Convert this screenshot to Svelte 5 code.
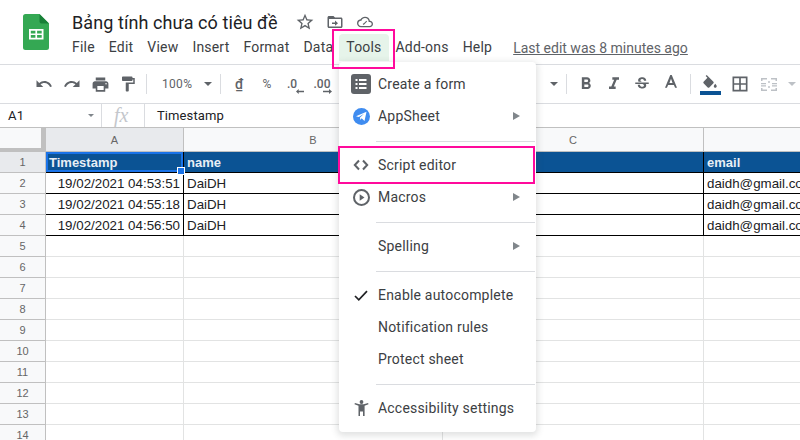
<script lang="ts">
  const menus = ['File', 'Edit', 'View', 'Insert', 'Format', 'Data', 'Tools', 'Add-ons', 'Help'];
  const times = ['19/02/2021 04:53:51', '19/02/2021 04:55:18', '19/02/2021 04:56:50'];
  const blankRows = [5, 6, 7, 8, 9, 10, 11, 12, 13, 14];
</script>

<div class="page">
  <header class="top">
    <svg class="logo" width="26" height="36" viewBox="0 0 26 36">
      <path d="M2.500 0H16.500L26 9.500V33.500a2.500 2.500 0 0 1-2.500 2.500H2.500A2.500 2.500 0 0 1 0 33.500V2.500A2.500 2.500 0 0 1 2.500 0z" fill="#34a853" />
      <path d="M16.500 0L26 9.500H18.500a2 2 0 0 1-2-2z" fill="#188038" />
      <path d="M6 15h14.500v10.500H6zM7.800 16.700v2.700h4.600v-2.700zm6.300 0v2.700h4.600v-2.700zM7.800 21v2.800h4.600V21zm6.300 0v2.800h4.600V21z" fill="#fff" fill-rule="evenodd" />
    </svg>
    <div class="titles">
      <div class="title-row">
        <span class="doc-title">Bảng tính chưa có tiêu đề</span>
        <svg class="ticon star" width="20" height="20" viewBox="0 0 24 24"><path fill="#5f6368" d="M22 9.240l-7.190-.620L12 2 9.190 8.630 2 9.240l5.460 4.730L5.820 21 12 17.270 18.180 21l-1.630-7.030L22 9.240zM12 15.400l-3.760 2.270 1-4.280-3.320-2.880 4.380-.380L12 6.100l1.710 4.040 4.380.380-3.320 2.880 1 4.280L12 15.400z" /></svg>
        <svg class="ticon folder" width="18" height="18" viewBox="0 0 24 24"><path fill="#5f6368" d="M20 6h-8l-2-2H4c-1.100 0-2 .9-2 2v12c0 1.100.9 2 2 2h16c1.100 0 2-.9 2-2V8c0-1.100-.9-2-2-2zm0 12H4V8h16v10zm-8-1l4-3.500-4-3.500v2.500H8v2h4V17z" /></svg>
        <svg class="ticon" width="16" height="16" viewBox="0 0 24 24"><path fill="#5f6368" d="M19.350 10.040A7.490 7.490 0 0 0 12 4C9.110 4 6.600 5.640 5.350 8.040A5.994 5.994 0 0 0 0 14c0 3.310 2.690 6 6 6h13c2.760 0 5-2.240 5-5 0-2.640-2.050-4.780-4.650-4.960zM19 18H6c-2.210 0-4-1.790-4-4s1.790-4 4-4h.71C7.370 7.690 9.480 6 12 6c3.040 0 5.500 2.460 5.500 5.500v.5H19c1.660 0 3 1.340 3 3s-1.340 3-3 3zm-9-1.500l-1.500-1.500 1.100-1.100.4.400 4-4 1.100 1.100-5.100 5.100z" /></svg>
      </div>
      <nav class="menubar">
        {#each menus as m}
          <span class="menu-item" class:open={m === 'Tools'}>{m}</span>
        {/each}
        <span class="last-edit">Last edit was 8 minutes ago</span>
      </nav>
    </div>
  </header>

  <div class="toolbar">
    <button class="tb"><svg width="18" height="18" viewBox="0 0 24 24"><path d="M12.500 8c-2.650 0-5.050.99-6.900 2.600L2 7v9h9l-3.620-3.620c1.390-1.160 3.160-1.880 5.120-1.880 3.540 0 6.550 2.310 7.600 5.500l2.370-.78C21.080 11.030 17.150 8 12.500 8z" /></svg></button>
    <button class="tb"><svg width="18" height="18" viewBox="0 0 24 24"><path d="M18.400 10.600C16.550 8.990 14.150 8 11.500 8c-4.650 0-8.580 3.030-9.960 7.220L3.900 16c1.050-3.190 4.050-5.500 7.600-5.500 1.950 0 3.730.72 5.120 1.880L13 16h9V7l-3.600 3.600z" /></svg></button>
    <button class="tb"><svg width="19" height="19" viewBox="0 0 24 24"><path d="M19 8H5c-1.660 0-3 1.340-3 3v6h4v4h12v-4h4v-6c0-1.660-1.340-3-3-3zm-3 11H8v-5h8v5zm3-7c-.55 0-1-.45-1-1s.45-1 1-1 1 .45 1 1-.45 1-1 1zm-1-9H6v4h12V3z" /></svg></button>
    <button class="tb"><svg width="18" height="18" viewBox="0 0 24 24"><path d="M18 4V3c0-.55-.45-1-1-1H5c-.55 0-1 .45-1 1v4c0 .55.45 1 1 1h12c.55 0 1-.45 1-1V6h1v4H9v11c0 .55.45 1 1 1h2c.55 0 1-.45 1-1v-9h8V4h-3z" /></svg></button>
    <span class="sep first"></span>
    <span class="zoom-val">100%</span>
    <span class="caret"></span>
    <span class="sep"></span>
    <span class="fmt dong">₫</span>
    <span class="fmt pct">%</span>
    <span class="fmt dec1">.0<svg width="8" height="5" viewBox="0 0 9 6" preserveAspectRatio="none"><path d="M0 3l3-3v2h6v2H3v2z" fill="#5f6368" /></svg></span>
    <span class="fmt dec2">.00<svg width="9" height="5" viewBox="0 0 9 6" preserveAspectRatio="none"><path d="M9 3L6 0v2H0v2h6v2z" fill="#5f6368" /></svg></span>
    <span class="grow"></span>
    <span class="caret"></span>
    <span class="sep after-caret"></span>
    <button class="tb"><svg width="20" height="20" viewBox="0 0 24 24"><path d="M15.600 10.790c.97-.67 1.650-1.770 1.650-2.790 0-2.260-1.750-4-4-4H7v14h7.040c2.090 0 3.710-1.700 3.710-3.790 0-1.520-.86-2.820-2.150-3.420zM10 6.500h3c.83 0 1.500.67 1.500 1.500s-.67 1.500-1.500 1.500h-3v-3zm3.500 9H10v-3h3.500c.83 0 1.500.67 1.500 1.500s-.67 1.500-1.500 1.500z" /></svg></button>
    <button class="tb"><svg width="20" height="20" viewBox="0 0 24 24"><path d="M10 4v3h2.210l-3.420 8H6v3h8v-3h-2.210l3.420-8H18V4z" /></svg></button>
    <button class="tb"><svg width="18" height="18" viewBox="0 0 24 24"><path d="M7.240 8.750c-.26-.48-.39-1.030-.39-1.670 0-.61.13-1.160.4-1.670.26-.5.63-.93 1.110-1.290.48-.35 1.050-.63 1.700-.83.66-.19 1.390-.29 2.180-.29.81 0 1.540.11 2.210.34.66.22 1.230.54 1.690.94.47.4.83.88 1.080 1.430.25.55.38 1.150.38 1.810h-3.010c0-.31-.05-.59-.15-.85-.09-.27-.24-.49-.44-.68-.2-.19-.45-.33-.75-.44-.3-.1-.66-.16-1.060-.16-.39 0-.74.04-1.030.13-.29.09-.53.21-.72.36-.19.16-.34.34-.44.55-.1.21-.15.43-.15.66 0 .48.25.88.74 1.210.38.25.77.48 1.410.7H7.390c-.05-.08-.11-.17-.15-.25zM21 12v-2H3v2h9.620c.18.07.4.14.55.2.37.17.66.34.87.51.21.17.35.36.43.57.07.2.11.43.11.69 0 .23-.05.45-.14.66-.09.2-.23.38-.42.53-.19.15-.42.26-.71.35-.29.08-.63.13-1.010.13-.43 0-.83-.04-1.180-.13s-.66-.23-.91-.42c-.25-.19-.45-.44-.59-.75-.14-.31-.25-.76-.25-1.210H6.400c0 .55.08 1.130.24 1.580.16.45.37.85.65 1.210.28.35.6.66.98.92.37.26.78.48 1.220.65.44.17.9.3 1.380.39.48.08.96.13 1.440.13.8 0 1.530-.09 2.180-.28s1.210-.45 1.670-.79c.46-.34.82-.77 1.070-1.270s.38-1.070.38-1.710c0-.6-.1-1.140-.31-1.610-.05-.11-.11-.23-.17-.33H21z" /></svg></button>
    <button class="tb letter-a"><svg width="18" height="18" viewBox="0 0 24 24"><path d="M9.930 13.500h4.140L12 7.980zM11 3h2l7 17h-2.600l-1.500-3.800H8.100L6.600 20H4z" transform="translate(0 -3)" /></svg></button>
    <span class="sep fill-sep"></span>
    <button class="tb fill">
      <svg width="18" height="18" viewBox="0 0 24 24"><path d="M16.560 8.940L7.620 0 6.210 1.410l2.380 2.380-5.150 5.150c-.59.59-.59 1.540 0 2.120l5.500 5.500c.29.29.68.44 1.060.44s.77-.15 1.060-.44l5.500-5.500c.59-.58.59-1.530 0-2.120zM19 11.500s-2 2.170-2 3.500c0 1.100.9 2 2 2s2-.9 2-2c0-1.330-2-3.500-2-3.500z" /></svg>
      <span class="swatch"></span>
    </button>
    <button class="tb borders"><svg width="20" height="20" viewBox="0 0 24 24"><path d="M3 3v18h18V3H3zm8 16H5v-6h6v6zm0-8H5V5h6v6zm8 8h-6v-6h6v6zm0-8h-6V5h6v6z" /></svg></button>
    <button class="tb off"><svg width="16" height="13" viewBox="0 0 16 13"><path d="M0 0h6v1.500H1.500V3H0zM10 0h6v3h-1.500V1.500H10zM0 10h1.500v1.500H6V13H0zM14.500 10H16v3h-6v-1.500h4.500zM0 5h5v1.300H0zM0 7.300h5v1.300H0zM11 5h5v1.300h-5zM11 7.300h5v1.300h-5zM7.300 3h1.400v2H7.300zM7.300 8h1.400v2H7.300z" /></svg></button>
    <span class="caret off-caret"></span>
  </div>

  <div class="formula">
    <span class="name-box">A1<span class="small-caret"></span></span>
    <span class="fx">fx</span>
    <span class="f-value">Timestamp</span>
  </div>

  <div class="grid">
    <div class="corner"></div>
    <div class="col sel">A</div>
    <div class="col">B</div>
    <div class="col">C</div>
    <div class="col last"></div>

    <div class="row-h sel">1</div>
    <div class="cell hd">Timestamp<span class="handle"></span></div>
    <div class="cell hd">name</div>
    <div class="cell hd"></div>
    <div class="cell hd nr">email</div>

    {#each times as t, i}
      <div class="row-h">{i + 2}</div>
      <div class="cell data num">{t}</div>
      <div class="cell data">DaiDH</div>
      <div class="cell data"></div>
      <div class="cell data nr">daidh@gmail.com</div>
    {/each}

    {#each blankRows as r}
      <div class="row-h">{r}</div>
      <div class="cell"></div>
      <div class="cell"></div>
      <div class="cell"></div>
      <div class="cell nr"></div>
    {/each}
  </div>

  <div class="dropdown">
    <div class="m-item">
      <span class="m-icon"><svg width="20" height="20" viewBox="0 0 20 20"><rect width="20" height="20" rx="3" fill="#5f6368" /><path d="M4.500 5h2v2h-2zM8 5h7.500v2H8zM4.500 9h2v2h-2zM8 9h7.500v2H8zM4.500 13h2v2h-2zM8 13h7.500v2H8z" fill="#fff" /></svg></span>
      Create a form
    </div>
    <div class="m-item">
      <span class="m-icon"><svg width="17" height="17" viewBox="0 0 17 17"><circle cx="8.500" cy="8.500" r="8.500" fill="#3f8cf0" /><path d="M3 8.200L13.500 3.800 11.500 13 8.600 10.300 7.300 12 7 9.500 11 5.800 5.800 9z" fill="#fff" /></svg></span>
      AppSheet
      <span class="arrow"></span>
    </div>
    <div class="m-sep"></div>
    <div class="m-item">
      <span class="m-icon"><svg width="16" height="12" viewBox="0 0 16 12"><path d="M6 1.500L1.800 6 6 10.500M10 1.500L14.200 6 10 10.500" fill="none" stroke="#5f6368" stroke-width="2" /></svg></span>
      Script editor
    </div>
    <div class="m-item">
      <span class="m-icon"><svg width="17" height="17" viewBox="0 0 17 17"><circle cx="8.500" cy="8.500" r="7.500" fill="none" stroke="#5f6368" stroke-width="2" /><path d="M6.700 5.200L11.500 8.500 6.700 11.800z" fill="#5f6368" /></svg></span>
      Macros
      <span class="arrow"></span>
    </div>
    <div class="m-sep"></div>
    <div class="m-item">
      <span class="m-icon"></span>
      Spelling
      <span class="arrow"></span>
    </div>
    <div class="m-sep"></div>
    <div class="m-item">
      <span class="m-icon"><svg width="14" height="11" viewBox="0 0 14 11"><path d="M1 6l3.800 3.800L13 1.200" fill="none" stroke="#202124" stroke-width="1.700" /></svg></span>
      Enable autocomplete
    </div>
    <div class="m-item"><span class="m-icon"></span>Notification rules</div>
    <div class="m-item"><span class="m-icon"></span>Protect sheet</div>
    <div class="m-sep"></div>
    <div class="m-item">
      <span class="m-icon"><svg width="15" height="16" viewBox="0 0 15 16"><circle cx="7.500" cy="2" r="1.900" fill="#5f6368" /><path d="M.5 4.200l.4-1.300 4.400 1.400h4.400l4.400-1.400.4 1.300-3.900 1.500V16H9V11.500H6V16H4.500V5.700z" fill="#5f6368" /></svg></span>
      Accessibility settings
    </div>
  </div>

  <div class="pink tools-box"></div>
  <div class="pink script-box"></div>
</div>

<style>
  :global(body) {
    margin: 0;
    background: #fff;
  }

  .page {
    position: relative;
    width: 800px;
    height: 440px;
    overflow: hidden;
    font-family: Roboto, "Liberation Sans", sans-serif;
    color: #202124;
  }

  .top {
    display: flex;
    height: 65px;
    box-sizing: border-box;
    border-bottom: 1px solid #dadce0;
    padding: 14px 0 0 23px;
  }

  .logo {
    flex-shrink: 0;
  }

  .titles {
    margin-left: 16px;
    margin-top: -2px;
  }

  .title-row {
    display: flex;
    align-items: center;
    height: 22px;
    margin-left: 7px;
    margin-top: -1px;
    margin-bottom: 1px;
  }

  .doc-title {
    font-size: 18px;
    letter-spacing: 0.08px;
    color: #202124;
    margin-right: 17px;
    white-space: nowrap;
  }

  .ticon {
    flex-shrink: 0;
  }

  .star {
    margin-right: 11px;
  }

  .folder {
    margin-right: 13px;
  }

  .menubar {
    display: flex;
    align-items: center;
    height: 27px;
    margin-top: 1px;
    white-space: nowrap;
  }

  .menu-item {
    font-size: 14px;
    letter-spacing: 0.2px;
    color: #3c4043;
    padding: 0 7px;
    line-height: 27px;
    border-radius: 4px 4px 0 0;
  }

  .menu-item.open {
    background: #e6f4ea;
    margin-left: -1px;
  }

  .last-edit {
    margin-left: 14px;
    font-size: 14px;
    color: #5f6368;
    text-decoration: underline;
  }

  .toolbar {
    display: flex;
    align-items: center;
    height: 39px;
    box-sizing: border-box;
    border-bottom: 1px solid #dadce0;
    padding-left: 30px;
    white-space: nowrap;
  }

  .tb {
    width: 28px;
    height: 28px;
    padding: 0;
    border: 0;
    background: none;
    display: flex;
    align-items: center;
    justify-content: center;
    flex-shrink: 0;
  }

  .tb svg {
    fill: #5f6368;
  }

  .tb.off svg {
    fill: #bdc1c6;
  }

  .sep {
    width: 1px;
    height: 20px;
    background: #dadce0;
    margin: 0 4px 0 8px;
    flex-shrink: 0;
  }

  .sep.first {
    margin: 0 15px 0 4px;
  }

  .zoom-val {
    font-size: 12px;
    color: #5f6368;
    letter-spacing: 0.3px;
    width: 42px;
  }

  .caret {
    width: 0;
    height: 0;
    border-left: 4px solid transparent;
    border-right: 4px solid transparent;
    border-top: 4px solid #5f6368;
    flex-shrink: 0;
  }

  .fmt {
    position: relative;
    font-size: 12px;
    color: #5f6368;
    text-align: center;
    display: inline-block;
    width: 28px;
    flex-shrink: 0;
  }

  .fmt svg {
    position: absolute;
    left: 15px;
    top: 12px;
  }

  .dong {
    font-size: 14px;
    text-decoration: underline;
    font-weight: 500;
  }

  .dec1 {
    width: 22px;
    font-weight: 500;
  }

  .dec2 {
    margin-left: 5px;
    font-weight: 500;
  }

  .grow {
    flex: 1;
  }

  .sep.after-caret {
    margin: 0 5px 0 8px;
  }

  .letter-a {
    margin-left: 1px;
  }

  .sep.fill-sep {
    margin: 0 4px 0 5px;
  }

  .tb.fill {
    flex-direction: column;
    justify-content: flex-start;
    width: 30px;
    padding-top: 5px;
    box-sizing: border-box;
    margin-right: 1px;
  }

  .swatch {
    flex-shrink: 0;
    width: 21px;
    height: 4px;
    background: #0b5394;
    margin-top: -2px;
  }

  .borders {
    margin-right: 1px;
  }

  .caret.off-caret {
    border-top-color: #bdc1c6;
    margin-left: 5px;
    margin-right: 4px;
  }

  .formula {
    display: flex;
    align-items: center;
    height: 24px;
    box-sizing: border-box;
    border-bottom: 1px solid #c0c0c0;
    font-size: 13px;
  }

  .name-box {
    position: relative;
    width: 102px;
    height: 100%;
    box-sizing: border-box;
    padding-left: 8px;
    line-height: 23px;
    letter-spacing: 0.3px;
    border-right: 1px solid #dadce0;
    flex-shrink: 0;
  }

  .small-caret {
    position: absolute;
    right: 7px;
    top: 10px;
    border-left: 3px solid transparent;
    border-right: 3px solid transparent;
    border-top: 3px solid #80868b;
  }

  .fx {
    width: 43px;
    height: 100%;
    box-sizing: border-box;
    border-right: 1px solid #dadce0;
    font-family: "Liberation Serif", serif;
    font-style: italic;
    font-size: 20px;
    line-height: 22px;
    color: #c4c7cc;
    padding-left: 12px;
    flex-shrink: 0;
  }

  .f-value {
    margin-left: 12px;
    letter-spacing: 0.1px;
  }

  .grid {
    display: grid;
    grid-template-columns: 46px 138px 259px 261px 1fr;
    grid-template-rows: 24px;
    grid-auto-rows: 21px;
    font-family: "Liberation Sans", Arial, sans-serif;
  }

  .corner {
    box-sizing: border-box;
    background: #f8f9fa;
    border-right: 5px solid #c0c0c0;
    border-bottom: 4px solid #c0c0c0;
  }

  .col,
  .row-h {
    box-sizing: border-box;
    background: #f8f9fa;
    border-right: 1px solid #c0c0c0;
    border-bottom: 1px solid #c0c0c0;
    font-size: 11px;
    color: #666;
    display: flex;
    align-items: center;
    justify-content: center;
  }

  .col.sel,
  .row-h.sel {
    background: #e8eaed;
  }

  .col.last {
    border-right: 0;
  }

  .cell {
    position: relative;
    box-sizing: border-box;
    border-right: 1px solid #e2e3e3;
    border-bottom: 1px solid #e2e3e3;
    font-size: 13.33px;
    line-height: 21px;
    padding: 0 3px;
    white-space: nowrap;
    overflow: hidden;
    color: #202124;
  }

  .cell.nr {
    border-right: 0;
  }

  .cell.hd {
    background: #0b5394;
    color: #e8eef5;
    font-size: 13px;
    font-weight: 700;
    border-right-color: #000;
    border-bottom-color: #000;
  }

  .cell.data {
    border-right-color: #000;
    border-bottom-color: #000;
  }

  .cell.num {
    text-align: right;
  }

  .cell:has(.handle) {
    overflow: visible;
    box-shadow: inset 0 0 0 2px #1a73e8;
    z-index: 1;
  }

  .handle {
    position: absolute;
    right: -2px;
    bottom: -3px;
    box-sizing: border-box;
    width: 8px;
    height: 8px;
    background: #1a73e8;
    border: 1px solid #fff;
  }

  .dropdown {
    position: absolute;
    left: 339px;
    top: 62px;
    width: 197px;
    box-sizing: border-box;
    padding: 6px 0 8px;
    background: #fff;
    border-radius: 4px;
    box-shadow: 0 2px 6px 2px rgba(60, 64, 67, 0.15);
    z-index: 2;
  }

  .m-item {
    position: relative;
    display: flex;
    align-items: center;
    height: 32px;
    padding-left: 11px;
    font-size: 14px;
    letter-spacing: 0.2px;
    color: #3c4043;
  }

  .m-icon {
    width: 22px;
    height: 20px;
    display: flex;
    align-items: center;
    justify-content: center;
    margin-right: 6px;
    flex-shrink: 0;
  }

  .arrow {
    position: absolute;
    left: 174px;
    top: 12px;
    border-left: 7px solid #80868b;
    border-top: 4px solid transparent;
    border-bottom: 4px solid transparent;
  }

  .m-sep {
    height: 1px;
    background: #dadce0;
    margin: 9px 1px 7px 37px;
  }

  .pink {
    position: absolute;
    box-sizing: border-box;
    border: 2px solid #ff0a9c;
    z-index: 3;
  }

  .tools-box {
    left: 332px;
    top: 29px;
    width: 63px;
    height: 40px;
  }

  .script-box {
    left: 338px;
    top: 146px;
    width: 197px;
    height: 38px;
  }
</style>
